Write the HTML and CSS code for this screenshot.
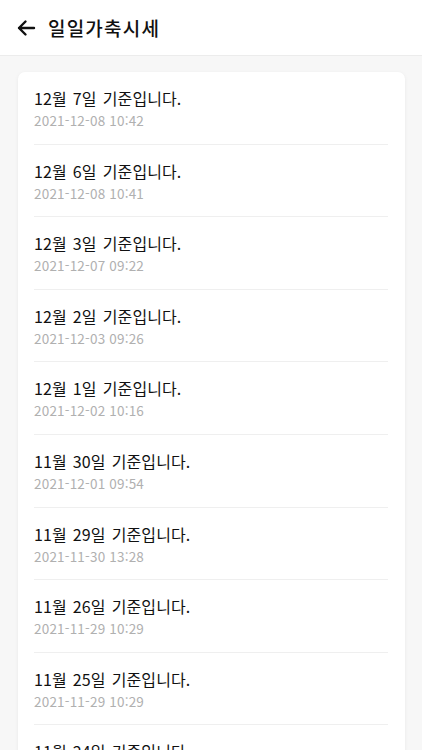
FILE: index.html
```html
<!DOCTYPE html>
<html lang="ko">
<head>
    <meta charset="UTF-8">
    <meta name="viewport" content="width=device-width, initial-scale=1.0">
    <title>일일가축시세</title>
    <link rel="stylesheet" href="styles.css">
</head>
<body>
    <!-- Header -->
    <header class="top-bar">
        <button class="back-btn" aria-label="back">
            <svg width="20" height="20" viewBox="0 0 20 20">
                <path d="M18 10H3M9.5 3.5L3 10l6.5 6.5" fill="none" stroke="#111" stroke-width="2.4" stroke-linecap="round" stroke-linejoin="round"/>
            </svg>
        </button>
        <h1 class="title">일일가축시세</h1>
    </header>

    <!-- List -->
    <main class="content">
        <ul class="card">
            <li class="item">
                <div class="item-title">12월 7일 기준입니다.</div>
                <div class="item-date">2021-12-08 10:42</div>
            </li>
            <li class="item">
                <div class="item-title">12월 6일 기준입니다.</div>
                <div class="item-date">2021-12-08 10:41</div>
            </li>
            <li class="item">
                <div class="item-title">12월 3일 기준입니다.</div>
                <div class="item-date">2021-12-07 09:22</div>
            </li>
            <li class="item">
                <div class="item-title">12월 2일 기준입니다.</div>
                <div class="item-date">2021-12-03 09:26</div>
            </li>
            <li class="item">
                <div class="item-title">12월 1일 기준입니다.</div>
                <div class="item-date">2021-12-02 10:16</div>
            </li>
            <li class="item">
                <div class="item-title">11월 30일 기준입니다.</div>
                <div class="item-date">2021-12-01 09:54</div>
            </li>
            <li class="item">
                <div class="item-title">11월 29일 기준입니다.</div>
                <div class="item-date">2021-11-30 13:28</div>
            </li>
            <li class="item">
                <div class="item-title">11월 26일 기준입니다.</div>
                <div class="item-date">2021-11-29 10:29</div>
            </li>
            <li class="item">
                <div class="item-title">11월 25일 기준입니다.</div>
                <div class="item-date">2021-11-29 10:29</div>
            </li>
            <li class="item">
                <div class="item-title">11월 24일 기준입니다.</div>
                <div class="item-date">2021-11-26 10:31</div>
            </li>
        </ul>
    </main>
</body>
</html>
```

FILE: styles.css
```css
html, body {
    height: 100%;
    overflow: hidden;
}
body {
    margin: 0;
    font-family: "Noto Sans CJK KR", "Noto Sans", sans-serif;
    background-color: #f7f7f7;
    color: #111;
}
.top-bar {
    height: 56px;
    display: flex;
    align-items: center;
    padding: 0 16px;
    background-color: #fff;
    border-bottom: 1px solid #ececec;
    box-sizing: border-box;
}
.back-btn {
    width: 20px;
    height: 20px;
    padding: 0;
    border: none;
    background: none;
    display: flex;
    margin-right: 12px;
}
.title {
    margin: 0;
    font-size: 19px;
    font-weight: 500;
    letter-spacing: 1.2px;
}
.content {
    padding: 16px 17px 0 18px;
}
.card {
    list-style: none;
    margin: 0;
    padding: 0 17px 0 16px;
    background-color: #fff;
    border-radius: 7px;
    box-shadow: 0 1px 4px rgba(0, 0, 0, 0.06);
}
.item {
    height: 72.6px;
    box-sizing: border-box;
    padding-top: 15px;
    border-bottom: 1px solid #efefef;
}
.item-title {
    font-size: 16px;
    line-height: 22px;
    word-spacing: 1.5px;
    letter-spacing: 0.1px;
}
.item-date {
    margin-top: 1px;
    font-size: 13.5px;
    line-height: 20px;
    letter-spacing: 0.2px;
    color: #b0b0b0;
}
```
